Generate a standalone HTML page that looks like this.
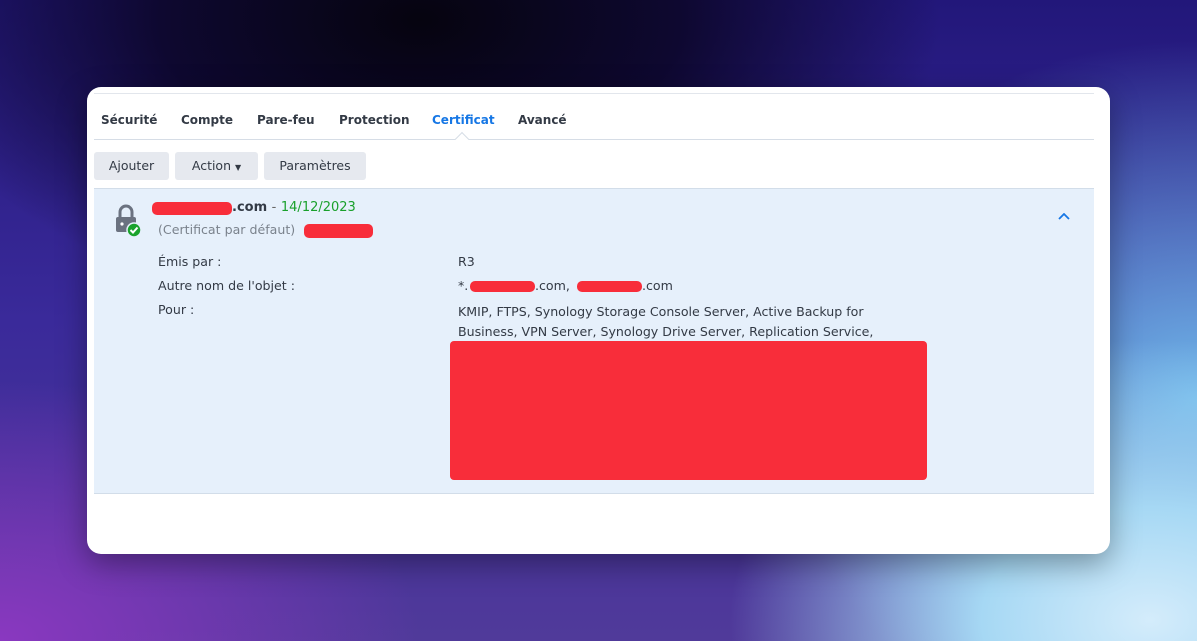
<!DOCTYPE html>
<html><head><meta charset="utf-8"><style>
*{margin:0;padding:0;box-sizing:border-box}
html,body{width:1197px;height:641px;overflow:hidden}
body{font-family:"DejaVu Sans","Liberation Sans",sans-serif;position:relative;
background:
radial-gradient(ellipse 420px 280px at 1150px 620px,#d4ecfb 0%,#a6d8f4 40%,rgba(140,200,240,0) 100%),
radial-gradient(ellipse 420px 360px at 1197px 400px,#6fb8ea 0%,rgba(60,110,210,0) 100%),
radial-gradient(ellipse 420px 260px at 0px 641px,#8a38c0 0%,rgba(110,50,170,0) 100%),
radial-gradient(ellipse 520px 300px at 420px 20px,#06040f 0%,#0e0830 50%,rgba(20,12,70,0) 100%),
linear-gradient(180deg,#22177a 0%,#3a2a9a 50%,#503a9a 100%);}
.card{position:absolute;left:87px;top:87px;width:1023px;height:467px;background:#fff;border-radius:14px;box-shadow:0 10px 30px rgba(0,0,0,.35)}
.topl{position:absolute;left:7px;right:16px;top:6px;height:1px;background:#e2e6ec}
.tab{position:absolute;top:26px;font-size:12px;font-weight:bold;color:#333a45;white-space:nowrap}
.tab.a{color:#1677e5}
.tline{position:absolute;left:7px;right:16px;top:52px;height:1px;background:#d6dde6}
.caret{position:absolute;left:370px;top:47px;width:10px;height:10px;background:#fff;border-left:1px solid #d6dde6;border-top:1px solid #d6dde6;transform:rotate(45deg)}
.btn{position:absolute;top:65px;height:28px;background:#e6e9ef;border-radius:3px;font-size:12.5px;color:#333a45;line-height:28px;text-align:center}
.panel{position:absolute;left:7px;right:16px;top:101px;height:306px;background:#e6f0fb;border-top:1px solid #d2dde9;border-bottom:1px solid #d2dde9}
.red{position:absolute;background:#f82d3a;border-radius:5px}
.t{position:absolute;font-size:12.6px;color:#333a45;white-space:nowrap}
</style></head><body>
<div class="card">
<div class="topl"></div>
<div class="tab" style="left:14px">Sécurité</div>
<div class="tab" style="left:94px">Compte</div>
<div class="tab" style="left:170px">Pare-feu</div>
<div class="tab" style="left:252px">Protection</div>
<div class="tab a" style="left:345px">Certificat</div>
<div class="tab" style="left:431px">Avancé</div>
<div class="tline"></div><div class="caret"></div>
<div class="btn" style="left:7px;width:75px">Ajouter</div>
<div class="btn" style="left:88px;width:83px">Action <span style="font-size:8px">▼</span></div>
<div class="btn" style="left:177px;width:102px">Paramètres</div>
<div class="panel">
<svg style="position:absolute;left:20px;top:14px" width="28" height="34" viewBox="0 0 28 34">
<path d="M6 14V9a6 6 0 0 1 12 0v5" fill="none" stroke="#6b7280" stroke-width="3"/>
<rect x="2" y="14" width="20" height="15" rx="2" fill="#6b7280"/>
<circle cx="8" cy="21" r="1.6" fill="#fff"/>
<circle cx="20" cy="27" r="7" fill="#1aa32c" stroke="#e6f0fb" stroke-width="1.5"/>
<path d="M16.5 27l2.5 2.5 4.5-5" fill="none" stroke="#fff" stroke-width="2"/>
</svg>
<div class="red" style="left:58px;top:13px;width:80px;height:13px"></div>
<div class="t" style="left:138px;top:11px;font-weight:bold;font-size:13px">.com <span style="color:#666;font-weight:normal">-</span> <span style="color:#19a02b;font-weight:normal">14/12/2023</span></div>
<div class="t" style="left:64px;top:33px;color:#7a828c">(Certificat par défaut)</div>
<div class="red" style="left:210px;top:35px;width:69px;height:14px"></div>
<svg style="position:absolute;left:964px;top:24px" width="12" height="8"><path d="M1 6l5-5 5 5" fill="none" stroke="#1677e5" stroke-width="1.8"/></svg>
<div class="t" style="left:64px;top:65px">Émis par :</div>
<div class="t" style="left:64px;top:89px">Autre nom de l'objet :</div>
<div class="t" style="left:64px;top:113px">Pour :</div>
<div class="t" style="left:364px;top:65px">R3</div>
<div class="t" style="left:364px;top:89px">*.</div>
<div class="red" style="left:376px;top:92px;width:65px;height:11px"></div>
<div class="t" style="left:441px;top:89px">.com,</div>
<div class="red" style="left:483px;top:92px;width:65px;height:11px"></div>
<div class="t" style="left:548px;top:89px">.com</div>
<div class="t" style="left:364px;top:113px;line-height:20px">KMIP, FTPS, Synology Storage Console Server, Active Backup for<br>Business, VPN Server, Synology Drive Server, Replication Service,</div>
<div class="red" style="left:356px;top:152px;width:477px;height:139px;border-radius:4px"></div>
</div>
</div>
</body></html>
